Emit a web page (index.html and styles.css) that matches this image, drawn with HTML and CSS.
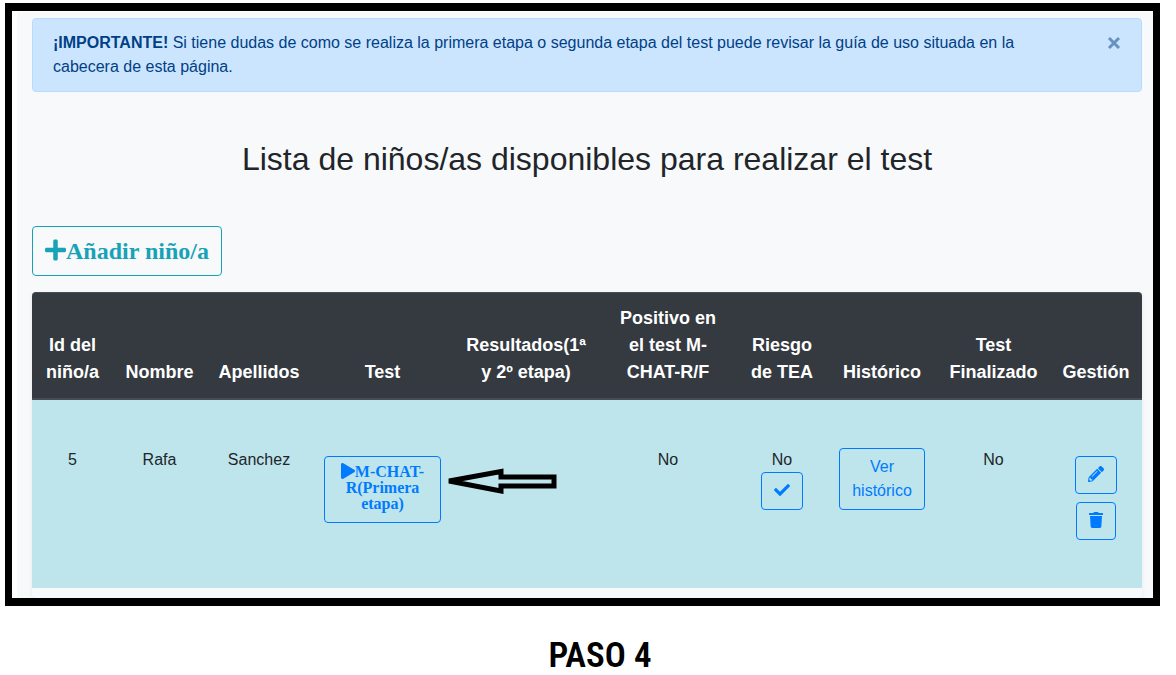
FILE: index.html
```html
<!DOCTYPE html>
<html lang="es">
<head>
<meta charset="utf-8">
<title>Lista de niños/as</title>
<link rel="stylesheet" href="styles.css">
</head>
<body>
<figure class="step">
  <div class="frame">
    <main class="content">
      <div class="alert" role="alert">
        <p class="alert-text"><strong>¡IMPORTANTE!</strong> Si tiene dudas de como se realiza la primera etapa o segunda etapa del test puede revisar la guía de uso situada en la cabecera de esta página.</p>
        <button class="alert-close" type="button" aria-label="Cerrar">
          <svg width="14" height="14" viewBox="0 0 14 14"><path d="M2 2l10 10M12 2L2 12" fill="none" stroke="currentColor" stroke-width="3"/></svg>
        </button>
      </div>
      <h1 class="title">Lista de niños/as disponibles para realizar el test</h1>
      <button class="btn btn-add" type="button"><svg class="icon-plus" width="21" height="24" viewBox="0 0 448 512" fill="currentColor"><path d="M416 208H272V64c0-17.700-14.300-32-32-32h-32c-17.700 0-32 14.300-32 32v144H32c-17.700 0-32 14.300-32 32v32c0 17.700 14.300 32 32 32h144v144c0 17.700 14.300 32 32 32h32c17.700 0 32-14.300 32-32V304h144c17.700 0 32-14.300 32-32v-32c0-17.700-14.300-32-32-32z"/></svg>Añadir niño/a</button>
      <div class="table-wrap">
        <table class="children">
          <colgroup>
            <col class="c-id"><col class="c-name"><col class="c-surname"><col class="c-test"><col class="c-results"><col class="c-positive"><col class="c-risk"><col class="c-history"><col class="c-done"><col class="c-manage">
          </colgroup>
          <thead>
            <tr>
              <th scope="col">Id del niño/a</th>
              <th scope="col">Nombre</th>
              <th scope="col">Apellidos</th>
              <th scope="col">Test</th>
              <th scope="col">Resultados(1ª y 2º etapa)</th>
              <th scope="col">Positivo en el test M-CHAT-R/F</th>
              <th scope="col">Riesgo de TEA</th>
              <th scope="col">Histórico</th>
              <th scope="col">Test Finalizado</th>
              <th scope="col">Gestión</th>
            </tr>
          </thead>
          <tbody>
            <tr>
              <td>5</td>
              <td>Rafa</td>
              <td>Sanchez</td>
              <td class="cell-test">
                <button class="btn btn-test" type="button"><svg class="icon-play" width="14" height="16" viewBox="0 0 448 512" fill="currentColor"><path d="M424.400 214.700L72.400 6.600C43.800-10.300 0 6.100 0 47.900V464c0 37.500 40.700 60.100 72.400 41.300l352-208c31.400-18.500 31.500-64.100 0-82.600z"/></svg>M-CHAT-R(Primera etapa)</button>
                <svg class="arrow" width="112" height="26" viewBox="0 0 112 26"><path d="M3 13L55 3.500V9H108V18H55V23Z" fill="none" stroke="#000" stroke-width="5"/></svg>
              </td>
              <td></td>
              <td>No</td>
              <td>No
                <button class="btn btn-icon" type="button" aria-label="Confirmar"><svg width="16" height="16" viewBox="0 0 512 512" fill="currentColor"><path d="M173.900 439.400L7.500 273c-10-10-10-26.200 0-36.200l36.200-36.200c10-10 26.200-10 36.200 0L192 312.700 432.100 72.600c10-10 26.200-10 36.200 0l36.200 36.200c10 10 10 26.200 0 36.200L210.100 439.400c-10 10-26.200 10-36.200 0z"/></svg></button>
              </td>
              <td><button class="btn btn-history" type="button">Ver histórico</button></td>
              <td>No</td>
              <td class="cell-manage">
                <div class="actions">
                  <button class="btn btn-icon" type="button" aria-label="Editar"><svg width="16" height="16" viewBox="0 0 512 512" fill="currentColor"><path d="M498 142.100l-46.100 46.100c-4.700 4.700-12.300 4.700-17 0l-111-111c-4.700-4.700-4.700-12.300 0-17l46.100-46.100c18.700-18.700 49.100-18.700 67.900 0l60.100 60.100c18.800 18.700 18.800 49.100 0 67.900zM284.200 99.800L21.600 362.400.4 483.900c-2.900 16.400 11.400 30.600 27.800 27.800l121.500-21.300 262.600-262.600c4.700-4.700 4.700-12.300 0-17l-111-111c-4.800-4.700-12.400-4.700-17.100 0zM124.100 339.900c-5.500-5.500-5.500-14.300 0-19.800l154-154c5.500-5.500 14.300-5.500 19.800 0s5.500 14.300 0 19.800l-154 154c-5.500 5.500-14.300 5.500-19.800 0zM88 424h48v36.300l-64.500 11.300-31.100-31.100L51.700 376H88v48z"/></svg></button>
                  <button class="btn btn-icon" type="button" aria-label="Eliminar"><svg width="14" height="16" viewBox="0 0 448 512" fill="currentColor"><path d="M432 32H312l-9.400-18.700A24 24 0 0 0 281.100 0H166.800a23.700 23.700 0 0 0-21.400 13.300L136 32H16A16 16 0 0 0 0 48v32a16 16 0 0 0 16 16h416a16 16 0 0 0 16-16V48a16 16 0 0 0-16-16zM53.200 467a48 48 0 0 0 47.900 45h245.800a48 48 0 0 0 47.900-45L416 128H32z"/></svg></button>
                </div>
              </td>
            </tr>
          </tbody>
        </table>
      </div>
    </main>
  </div>
  <figcaption class="caption">PASO 4</figcaption>
</figure>
</body>
</html>
```
FILE: styles.css
```css
* { box-sizing: border-box; }

body {
  margin: 0;
  background: #fff;
  color: #212529;
  font: 16px/24px "Liberation Sans", Arial, sans-serif;
}

.step { margin: 0; padding: 3px 16px 0 5px; }

.frame {
  border: 7px solid #000;
  border-width: 8px 7px;
  padding: 1px 0 0 5px;
  overflow: hidden;
}

.content {
  padding: 6px 11px 0 15px;
  background: #f8f9fa;
}

.alert {
  display: flex;
  justify-content: space-between;
  align-items: flex-start;
  gap: 64px;
  padding: 12px 20px;
  border: 1px solid #b8daff;
  border-radius: 4px;
  background: #cce5ff;
  color: #004085;
}

.alert-text { margin: 0; }

.alert-close {
  display: flex;
  padding: 5px 0;
  border: 0;
  background: none;
  color: #6691c1;
}

.title {
  margin: 48px 0;
  font-size: 32px;
  font-weight: 400;
  line-height: 38px;
  text-align: center;
}

.btn {
  border: 1px solid #007bff;
  border-radius: 4px;
  padding: 6px 12px;
  background: transparent;
  color: #007bff;
  font: inherit;
  text-align: center;
}

.btn svg { vertical-align: -2px; }

.btn-add {
  display: block;
  border-color: #17a2b8;
  color: #17a2b8;
  font: bold 24px/36px "Liberation Serif", "Times New Roman", serif;
}

.btn .icon-plus { vertical-align: -3px; }

.table-wrap {
  margin-top: 16px;
  padding-bottom: 10px;
  border-radius: 4px;
  box-shadow: 0 2px 4px rgba(0, 0, 0, 0.075);
}

.children {
  width: 100%;
  table-layout: fixed;
  border-collapse: separate;
  border-spacing: 0;
  text-align: center;
}

.c-id { width: 81px; }
.c-name { width: 93px; }
.c-surname { width: 106px; }
.c-test { width: 141px; }
.c-results { width: 146px; }
.c-positive { width: 138px; }
.c-risk { width: 90px; }
.c-history { width: 110px; }
.c-done { width: 113px; }
.c-manage { width: 92px; }

.children th {
  padding: 12px;
  border-top: 1px solid #454d55;
  border-bottom: 2px solid #454d55;
  background: #343a40;
  color: #fff;
  font-size: 18px;
  line-height: 27px;
  vertical-align: bottom;
}

.children th:first-child { border-top-left-radius: 4px; }
.children th:last-child { border-top-right-radius: 4px; }

.children td {
  padding: 48px 12px;
  background: #bee5eb;
  vertical-align: top;
}

.children .cell-test,
.children .cell-manage { padding-top: 56px; }

.cell-test { position: relative; }

.btn-test {
  display: block;
  width: 100%;
  padding-bottom: 10px;
  font: bold 16px/16px "Liberation Serif", "Times New Roman", serif;
}

.arrow {
  position: absolute;
  top: 68px;
  left: 134px;
}

.actions {
  display: flex;
  flex-direction: column;
  align-items: center;
  gap: 8px;
}

.caption {
  padding: 29px 0 0 35px;
  color: #000;
  font: 600 35px/42px "Roboto Condensed", "Liberation Sans Narrow", "Liberation Sans", sans-serif;
  text-align: center;
}
```
